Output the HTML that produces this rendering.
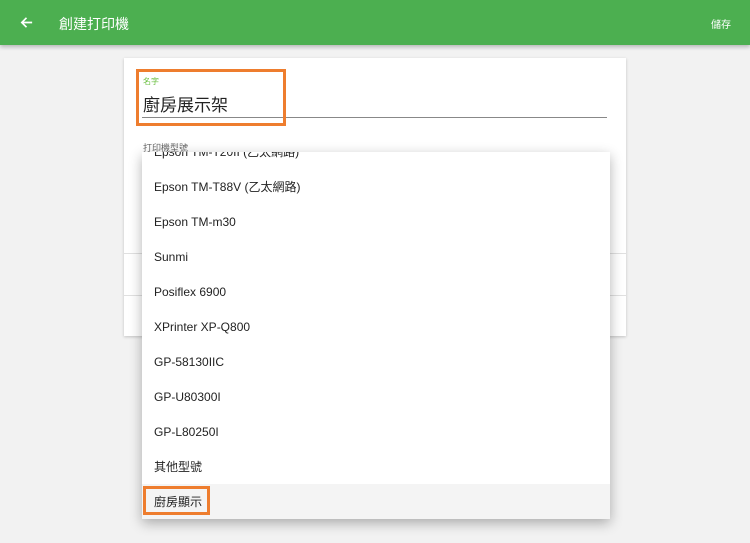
<!DOCTYPE html>
<html><head><meta charset="utf-8"><style>
*{margin:0;padding:0;box-sizing:border-box}
body{width:750px;height:543px;background:#f2f2f2;font-family:"Liberation Sans","Noto Sans CJK TC",sans-serif;position:relative;overflow:hidden}
.hdr{position:absolute;left:0;top:0;width:750px;height:45px;background:#4caf50;box-shadow:0 2px 4px rgba(0,0,0,.25);color:#fff}
.card{position:absolute;left:124px;top:58px;width:502px;height:278px;background:#fff;box-shadow:0 1px 3px rgba(0,0,0,.2)}
.dd{position:absolute;left:142px;top:152px;width:468px;height:367px;background:#fff;box-shadow:0 4px 12px rgba(0,0,0,.3);overflow:hidden}
.it{position:absolute;left:12px;font-size:12px;color:#222;line-height:16px}
.ob{position:absolute;border:3px solid #ee7d2e}
</style></head><body>
<div class="hdr">
<svg style="position:absolute;left:19px;top:15px" width="15" height="15" viewBox="0 0 16 16"><path d="M14 8H3M8 3L3 8l5 5" stroke="#fff" stroke-width="1.8" fill="none"/></svg>
<div style="position:absolute;left:59px;top:14px;font-size:14px">創建打印機</div>
<div style="position:absolute;left:711px;top:16px;font-size:10px">儲存</div>
</div>
<div class="card">
<div style="position:absolute;left:19px;top:18px;font-size:8px;color:#6abf40">名字</div>
<div style="position:absolute;left:19px;top:33px;font-size:17px;color:#222">廚房展示架</div>
<div style="position:absolute;left:18px;top:59px;width:465px;height:1px;background:#888"></div>
<div style="position:absolute;left:19px;top:83px;font-size:9px;color:#666">打印機型號</div>
<div style="position:absolute;left:0;top:195px;width:502px;height:1px;background:#e0e0e0"></div>
<div style="position:absolute;left:0;top:237px;width:502px;height:1px;background:#e0e0e0"></div>
</div>
<div class="ob" style="left:136px;top:69px;width:150px;height:57px"></div>
<div class="dd">
<div class="it" style="top:-8px">Epson TM-T20II (乙太網路)</div>
<div class="it" style="top:27px">Epson TM-T88V (乙太網路)</div>
<div class="it" style="top:62px">Epson TM-m30</div>
<div class="it" style="top:97px">Sunmi</div>
<div class="it" style="top:132px">Posiflex 6900</div>
<div class="it" style="top:167px">XPrinter XP-Q800</div>
<div class="it" style="top:202px">GP-58130IIC</div>
<div class="it" style="top:237px">GP-U80300I</div>
<div class="it" style="top:272px">GP-L80250I</div>
<div class="it" style="top:307px">其他型號</div>
<div style="position:absolute;left:0;top:332px;width:468px;height:35px;background:#f4f4f4"></div>
<div class="it" style="top:342px">廚房顯示</div>
</div>
<div class="ob" style="left:143px;top:486px;width:67px;height:29px"></div>
</body></html>
